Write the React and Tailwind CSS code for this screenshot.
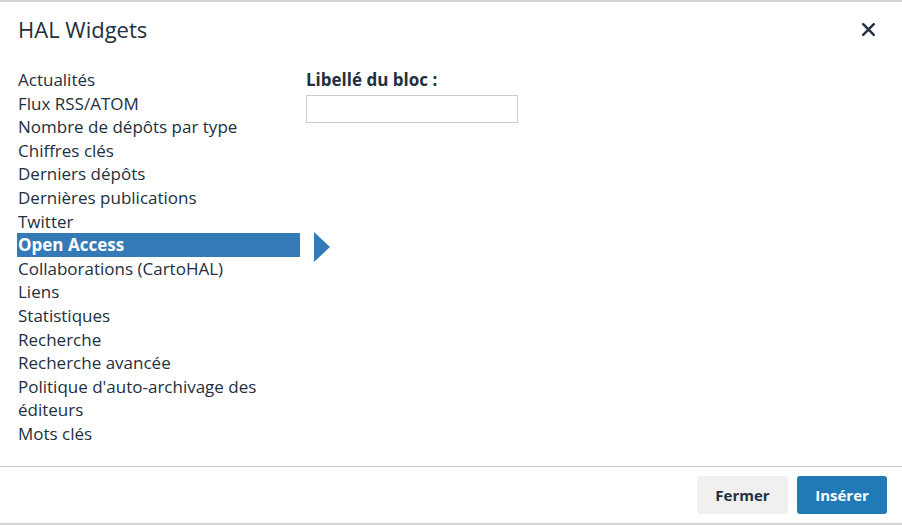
const items = [
  'Actualités',
  'Flux RSS/ATOM',
  'Nombre de dépôts par type',
  'Chiffres clés',
  'Derniers dépôts',
  'Dernières publications',
  'Twitter',
  'Open Access',
  'Collaborations (CartoHAL)',
  'Liens',
  'Statistiques',
  'Recherche',
  'Recherche avancée',
  "Politique d'auto-archivage des éditeurs",
  'Mots clés',
];

const App = () => {
  return (
    <div
      className="w-[902px] h-[525px] bg-white text-[#222f3e] flex flex-col border-t-2 border-b-2 border-[#d4d4d4]"
      style={{ fontFamily: '"Open Sans", "Noto Sans", sans-serif' }}
    >
      {/* header */}
      <div className="h-[55px] flex items-center justify-between pl-[18px] pr-[27px]">
        <h1 className="text-[22px]">HAL Widgets</h1>
        <button aria-label="Fermer">
          <svg width="13" height="13" viewBox="0 0 13 13">
            <path d="M1.2 1.2 L11.8 11.8 M11.8 1.2 L1.2 11.8" stroke="#222f3e" strokeWidth="2.4" strokeLinecap="round" />
          </svg>
        </button>
      </div>

      {/* body */}
      <div className="flex-1 flex pl-[17px] pt-[11px]">
        <ul className="w-[283px] text-[17px] leading-[23.6px]">
          {items.map((item) => (
            <li
              key={item}
              className={
                item === 'Open Access'
                  ? 'bg-[#337ab7] text-white font-bold pl-[1px]'
                  : 'pl-[1px]'
              }
            >
              {item}
            </li>
          ))}
        </ul>
        <div className="pt-[164px] pl-[14px]">
          <svg width="16" height="30" viewBox="0 0 16 30">
            <polygon points="0,0 16,15 0,30" fill="#337ab7" />
          </svg>
        </div>
        <div className="-ml-[24px]">
          <label className="block text-[17px] font-bold leading-[23.6px]">Libellé du bloc :</label>
          <input type="text" className="mt-[3px] w-[212px] h-[28px] border border-[#cccccc] outline-none" />
        </div>
      </div>

      {/* footer */}
      <div className="h-[57px] border-t border-[#cccccc] flex items-center justify-end gap-[9px] pr-[15px]">
        <button className="w-[91px] h-[38px] rounded-[3px] bg-[#f0f0f0] text-[#222f3e] font-bold text-[15px]">Fermer</button>
        <button className="w-[90px] h-[38px] rounded-[3px] bg-[#207ab7] text-white font-bold text-[15px]">Insérer</button>
      </div>
    </div>
  );
};

export default App;
